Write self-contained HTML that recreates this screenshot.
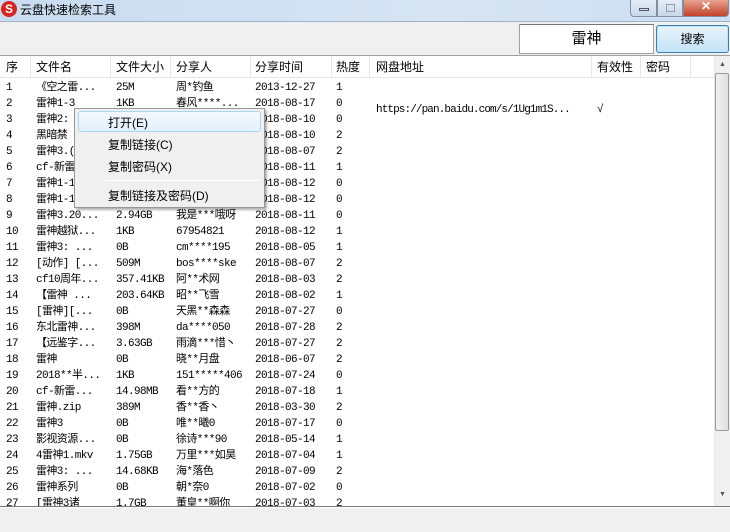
<!DOCTYPE html>
<html><head><meta charset="utf-8"><style>
*{margin:0;padding:0;box-sizing:border-box}
body{width:730px;height:532px;overflow:hidden;background:#f0f0f0;position:relative;font-family:"Liberation Sans","Noto Sans CJK SC",sans-serif;font-size:12px;color:#000}
#title{position:absolute;left:0;top:0;width:730px;height:22px;background:linear-gradient(90deg,#c9dcf0,#d6e4f3 60%,#cfdff0);border-bottom:1px solid #9fb3c8}
#title .t{position:absolute;left:20px;top:1px;font-size:12px}
#logo{position:absolute;left:1px;top:1px;width:16px;height:16px;border-radius:50%;background:#d8231e;color:#fff;font-weight:bold;font-size:12px;text-align:center;line-height:16px}
.wb{position:absolute;top:0;height:17px;border:1px solid #7e8fa5;border-top:none}
#search{position:absolute;left:519px;top:24px;width:135px;height:30px;background:#fff;border:1px solid #a0a0a0;border-top-color:#777;font-size:15px;text-align:center;line-height:27px}
#btn{position:absolute;left:656px;top:25px;width:73px;height:28px;border:1px solid #3c7fb1;border-radius:3px;background:linear-gradient(#e8f4fb,#c4e3f6);box-shadow:inset 0 0 0 1px #bfe4f8;text-align:center;line-height:26px;font-size:12px}
#list{position:absolute;left:0;top:55px;width:730px;height:451px;background:#fff;border-top:1px solid #a0a0a0;overflow:hidden}
#hdr{position:absolute;left:0;top:0;width:714px;height:22px;border-bottom:1px solid #e5e5e5;background:#fff}
#hdr span{position:absolute;top:2px;font-size:12px}
.sep{position:absolute;top:0;height:22px;width:1px;background:#e5e5e5}
.r{position:absolute;left:0;height:16px;width:714px;font-family:"Liberation Mono","Noto Sans CJK SC",monospace;font-size:11px;letter-spacing:-0.6px;line-height:16px}
.r span{position:absolute;white-space:nowrap;top:0}
.c0{left:6px}.c1{left:36px}.c2{left:116px}.c3{left:176px}.c4{left:255px}.c5{left:336px}.c6{left:376px;letter-spacing:-0.9px}.c7{left:597px}
#sb{position:absolute;left:714px;top:0;width:16px;height:451px;background:#f0f0f0;border-left:1px solid #e6e6e6}
#thumb{position:absolute;left:715px;top:17px;width:14px;height:358px;border:1px solid #9a9a9a;border-radius:2px;background:linear-gradient(90deg,#f0f0f0,#e0e0e0)}
#menu{position:absolute;left:74px;top:108px;width:191px;height:100px;background:#f0f0f0;border:1px solid #979797;box-shadow:2px 2px 2px rgba(0,0,0,.3)}
#menu .m{position:absolute;left:33px;font-size:12px}
#hl{position:absolute;left:3px;top:2px;width:183px;height:21px;border:1px solid #a8d8f0;border-radius:3px;background:linear-gradient(#f4f9fd,#e2f0fa)}
#status{position:absolute;left:0;top:506px;width:730px;height:26px;background:#f0f0f0;border-top:1px solid #7a7a7a;box-shadow:inset 0 1px 0 #fff}
</style></head><body>
<div id="title"><div id="logo">S</div><div class="t">云盘快速检索工具</div>
<div class="wb" style="left:630px;width:27px;border-radius:0 0 0 4px;background:linear-gradient(#e4edf7,#c8d8ea)"><div style="position:absolute;left:8px;top:8px;width:10px;height:3px;border:1px solid #556"></div></div>
<div class="wb" style="left:657px;width:26px;background:linear-gradient(#e4edf7,#c8d8ea)"><div style="position:absolute;left:8px;top:4px;width:9px;height:8px;border:1px solid #99a"></div></div>
<div class="wb" style="left:683px;width:46px;border-radius:0 0 4px 0;background:linear-gradient(#e8a290,#c2412b);color:#fff;text-align:center;font-weight:bold;line-height:12px">✕</div>
</div>
<div id="search">雷神</div>
<div id="btn">搜索</div>
<div id="list">
<div id="hdr">
<span style="left:6px">序</span><span style="left:36px">文件名</span><span style="left:116px">文件大小</span><span style="left:176px">分享人</span><span style="left:255px">分享时间</span><span style="left:336px">热度</span><span style="left:376px">网盘地址</span><span style="left:597px">有效性</span><span style="left:646px">密码</span>
<div class="sep" style="left:30px"></div><div class="sep" style="left:110px"></div><div class="sep" style="left:170px"></div><div class="sep" style="left:250px"></div><div class="sep" style="left:331px"></div><div class="sep" style="left:369px"></div><div class="sep" style="left:591px"></div><div class="sep" style="left:640px"></div><div class="sep" style="left:690px"></div>
</div>
<div class="r" style="top:24px"><span class="c0">1</span><span class="c1">《空之雷...</span><span class="c2">25M</span><span class="c3">周*钓鱼</span><span class="c4">2013-12-27</span><span class="c5">1</span></div>
<div class="r" style="top:40px"><span class="c0">2</span><span class="c1">雷神1-3</span><span class="c2">1KB</span><span class="c3">春风****...</span><span class="c4">2018-08-17</span><span class="c5">0</span><span class="c6" style="top:6px">https://pan.baidu.com/s/1Ug1m1S...</span><span class="c7" style="top:6px">√</span></div>
<div class="r" style="top:56px"><span class="c0">3</span><span class="c1">雷神2:</span><span class="c4">2018-08-10</span><span class="c5">0</span></div>
<div class="r" style="top:72px"><span class="c0">4</span><span class="c1">黑暗禁</span><span class="c4">2018-08-10</span><span class="c5">2</span></div>
<div class="r" style="top:88px"><span class="c0">5</span><span class="c1">雷神3.(</span><span class="c4">2018-08-07</span><span class="c5">2</span></div>
<div class="r" style="top:104px"><span class="c0">6</span><span class="c1">cf-新雷</span><span class="c4">2018-08-11</span><span class="c5">1</span></div>
<div class="r" style="top:120px"><span class="c0">7</span><span class="c1">雷神1-1</span><span class="c4">2018-08-12</span><span class="c5">0</span></div>
<div class="r" style="top:136px"><span class="c0">8</span><span class="c1">雷神1-1</span><span class="c4">2018-08-12</span><span class="c5">0</span></div>
<div class="r" style="top:152px"><span class="c0">9</span><span class="c1">雷神3.20...</span><span class="c2">2.94GB</span><span class="c3">我是***哦呀</span><span class="c4">2018-08-11</span><span class="c5">0</span></div>
<div class="r" style="top:168px"><span class="c0">10</span><span class="c1">雷神越狱...</span><span class="c2">1KB</span><span class="c3">67954821</span><span class="c4">2018-08-12</span><span class="c5">1</span></div>
<div class="r" style="top:184px"><span class="c0">11</span><span class="c1">雷神3: ...</span><span class="c2">0B</span><span class="c3">cm****195</span><span class="c4">2018-08-05</span><span class="c5">1</span></div>
<div class="r" style="top:200px"><span class="c0">12</span><span class="c1">[动作] [...</span><span class="c2">509M</span><span class="c3">bos****ske</span><span class="c4">2018-08-07</span><span class="c5">2</span></div>
<div class="r" style="top:216px"><span class="c0">13</span><span class="c1">cf10周年...</span><span class="c2">357.41KB</span><span class="c3">阿**术网</span><span class="c4">2018-08-03</span><span class="c5">2</span></div>
<div class="r" style="top:232px"><span class="c0">14</span><span class="c1">【雷神 ...</span><span class="c2">203.64KB</span><span class="c3">昭**飞雪</span><span class="c4">2018-08-02</span><span class="c5">1</span></div>
<div class="r" style="top:248px"><span class="c0">15</span><span class="c1">[雷神][...</span><span class="c2">0B</span><span class="c3">天黑**森森</span><span class="c4">2018-07-27</span><span class="c5">0</span></div>
<div class="r" style="top:264px"><span class="c0">16</span><span class="c1">东北雷神...</span><span class="c2">398M</span><span class="c3">da****050</span><span class="c4">2018-07-28</span><span class="c5">2</span></div>
<div class="r" style="top:280px"><span class="c0">17</span><span class="c1">【远鉴字...</span><span class="c2">3.63GB</span><span class="c3">雨滴***惜丶</span><span class="c4">2018-07-27</span><span class="c5">2</span></div>
<div class="r" style="top:296px"><span class="c0">18</span><span class="c1">雷神</span><span class="c2">0B</span><span class="c3">晓**月盘</span><span class="c4">2018-06-07</span><span class="c5">2</span></div>
<div class="r" style="top:312px"><span class="c0">19</span><span class="c1">2018**半...</span><span class="c2">1KB</span><span class="c3">151*****406</span><span class="c4">2018-07-24</span><span class="c5">0</span></div>
<div class="r" style="top:328px"><span class="c0">20</span><span class="c1">cf-新雷...</span><span class="c2">14.98MB</span><span class="c3">看**方的</span><span class="c4">2018-07-18</span><span class="c5">1</span></div>
<div class="r" style="top:344px"><span class="c0">21</span><span class="c1">雷神.zip</span><span class="c2">389M</span><span class="c3">香**香丶</span><span class="c4">2018-03-30</span><span class="c5">2</span></div>
<div class="r" style="top:360px"><span class="c0">22</span><span class="c1">雷神3</span><span class="c2">0B</span><span class="c3">唯**曦0</span><span class="c4">2018-07-17</span><span class="c5">0</span></div>
<div class="r" style="top:376px"><span class="c0">23</span><span class="c1">影视资源...</span><span class="c2">0B</span><span class="c3">徐诗***90</span><span class="c4">2018-05-14</span><span class="c5">1</span></div>
<div class="r" style="top:392px"><span class="c0">24</span><span class="c1">4雷神1.mkv</span><span class="c2">1.75GB</span><span class="c3">万里***如昊</span><span class="c4">2018-07-04</span><span class="c5">1</span></div>
<div class="r" style="top:408px"><span class="c0">25</span><span class="c1">雷神3: ...</span><span class="c2">14.68KB</span><span class="c3">海*落色</span><span class="c4">2018-07-09</span><span class="c5">2</span></div>
<div class="r" style="top:424px"><span class="c0">26</span><span class="c1">雷神系列</span><span class="c2">0B</span><span class="c3">朝*奈0</span><span class="c4">2018-07-02</span><span class="c5">0</span></div>
<div class="r" style="top:440px"><span class="c0">27</span><span class="c1">[雷神3诸</span><span class="c2">1.7GB</span><span class="c3">董皇**啊你</span><span class="c4">2018-07-03</span><span class="c5">2</span></div>
<div id="sb"><div style="position:absolute;left:4px;top:5px;font-size:7px;color:#555">▲</div><div style="position:absolute;left:4px;top:435px;font-size:7px;color:#555">▼</div></div>
<div id="thumb"></div>
</div>
<div id="menu">
<div id="hl"></div>
<div class="m" style="top:5px">打开(E)</div>
<div class="m" style="top:27px">复制链接(C)</div>
<div class="m" style="top:49px">复制密码(X)</div>
<div style="position:absolute;left:30px;top:71px;width:156px;height:1px;background:#d7d7d7;border-bottom:1px solid #fff"></div>
<div class="m" style="top:78px">复制链接及密码(D)</div>
</div>
<div id="status"></div>
</body></html>
